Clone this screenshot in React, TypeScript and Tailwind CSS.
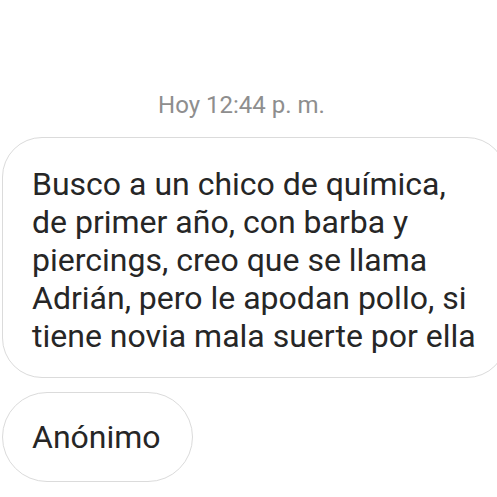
import React from 'react'

export default function App() {
  return (
    <div
      className="relative h-[497px] w-[497px] overflow-hidden bg-white text-[#262626]"
      style={{ fontFamily: 'Roboto, "Noto Sans", sans-serif' }}
    >
      <div className="flex flex-col pt-[91px]">
        {/* hora del mensaje */}
        <div className="flex justify-center pr-[14px] text-[24px] leading-[28px] text-[#8e8e8e]">
          Hoy 12:44 p. m.
        </div>

        {/* burbuja del mensaje */}
        <div className="mt-[18px] ml-[2px] w-[505px] shrink-0 rounded-[40px] border border-[#dbdbdb] pt-[27px] pb-[22px] pl-[29px]">
          <p className="text-[32px] leading-[38px]">
            Busco a un chico de química,
            <br />
            de primer año, con barba y
            <br />
            piercings, creo que se llama
            <br />
            Adrián, pero le apodan pollo, si
            <br />
            tiene novia mala suerte por ella
          </p>
        </div>

        {/* remitente */}
        <div className="mt-[14px] ml-[2px] flex h-[90px] w-[191px] items-center rounded-full border border-[#dbdbdb] pl-[29px]">
          <span className="text-[32px] leading-[38px]">Anónimo</span>
        </div>
      </div>
    </div>
  )
}
